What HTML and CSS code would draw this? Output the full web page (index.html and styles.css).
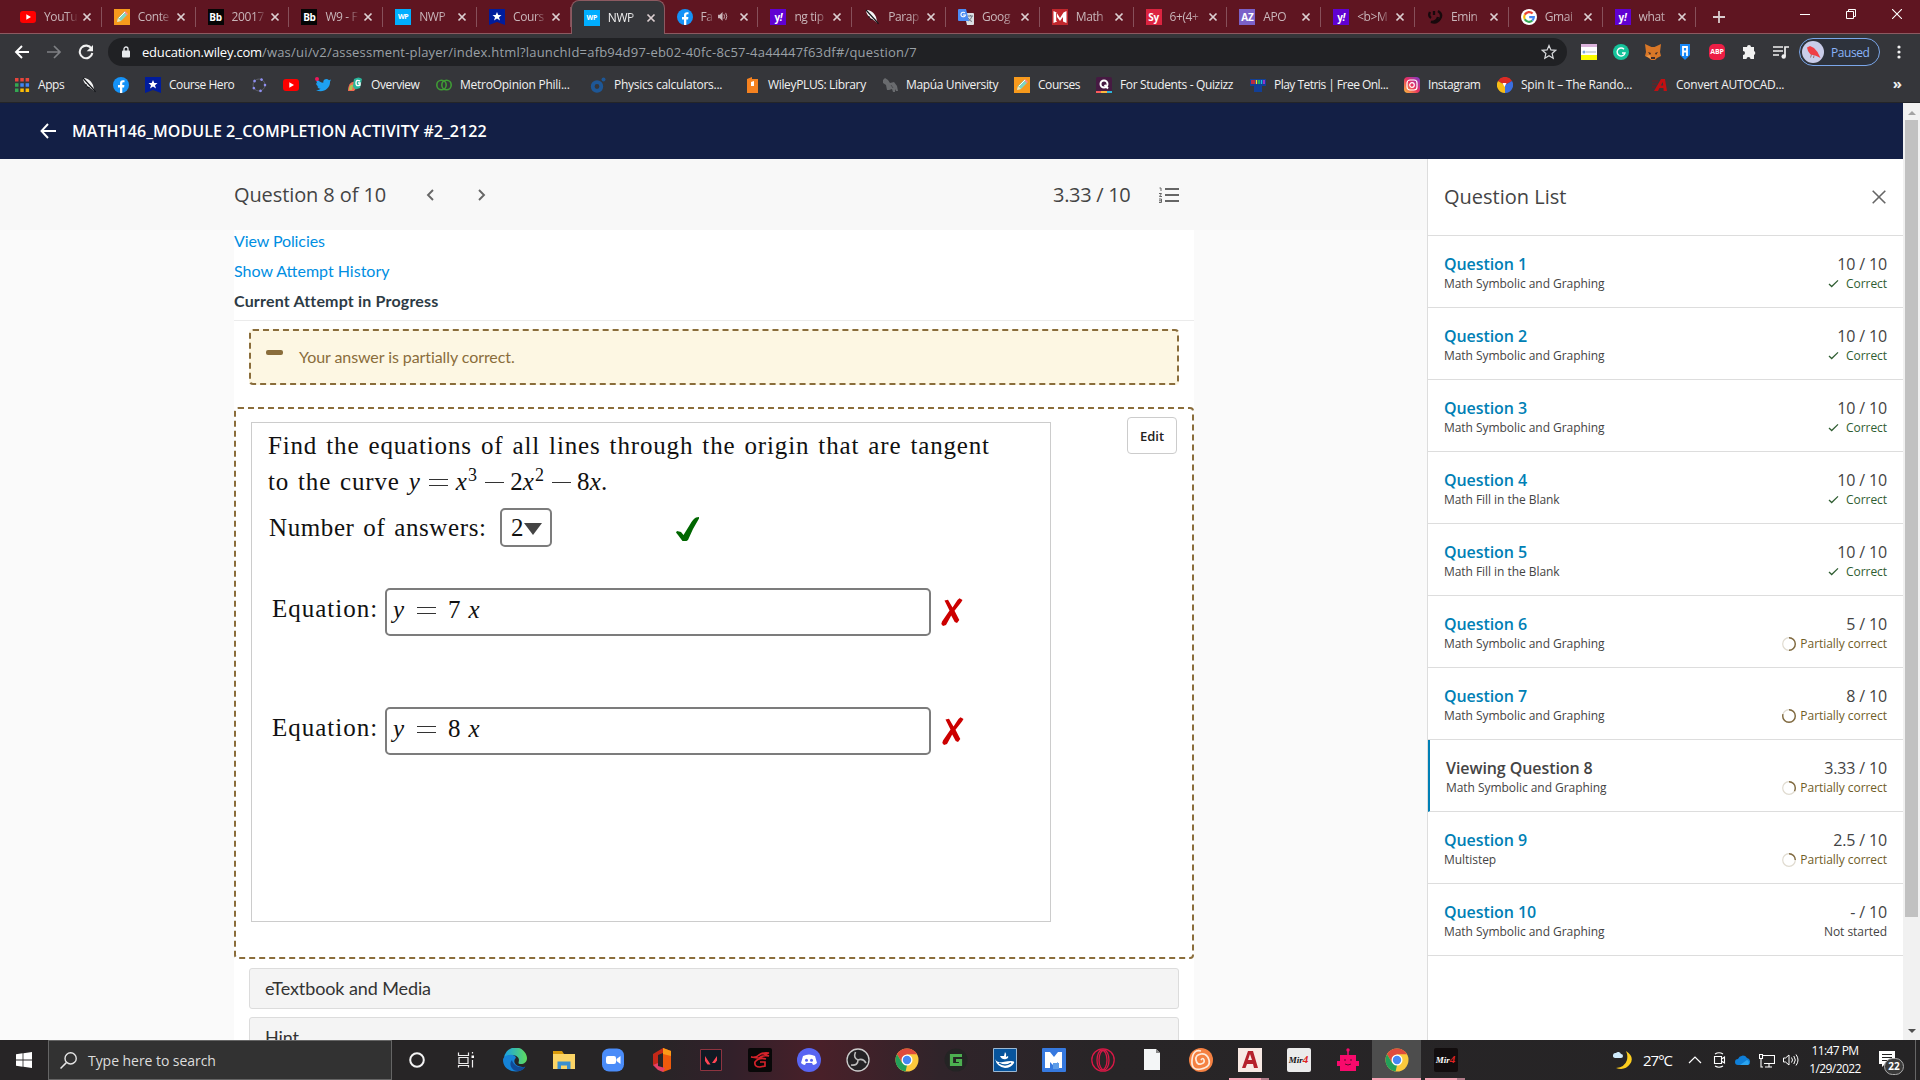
FILE: index.html
```html
<!DOCTYPE html>
<html lang="en">
<head>
<meta charset="utf-8">
<title>NWP Assessment Player</title>
<link rel="stylesheet" href="styles.css">
</head>
<body>
<svg class="defs" width="0" height="0">
  <symbol id="yt" viewBox="0 0 16 16"><rect y="2" width="16" height="12" rx="3" fill="#f00"/><path d="M6.3 5.2v5.6L11 8z" fill="#fff"/></symbol>
  <symbol id="pencil" viewBox="0 0 16 16"><rect width="16" height="16" fill="#f79a1c"/><path d="M3 13l1-4 6-6 3 3-6 6z" fill="#7fd4c0"/><path d="M10 3l1-1 3 3-1 1z" fill="#f58aa8"/><path d="M3 13l1-4 3 3z" fill="#fce2b0"/><path d="M5 9l6-6" stroke="#fff" stroke-width="1"/></symbol>
  <symbol id="hero" viewBox="0 0 16 16"><path d="M0 0h16v16l-8-3-8 3z" fill="#001c9c"/><path d="M8 3l1.3 3h3.2L10 8.300l1 3.200-3-2-3 2 1-3.200L3.500 6h3.200z" fill="#fff"/></symbol>
  <symbol id="fb" viewBox="0 0 16 16"><circle cx="8" cy="8" r="8" fill="#1592f7"/><path d="M7 16v-5.600H5V8h2V6.300C7 4.300 8.100 3.200 10 3.200l1.500.1v2h-1c-.9 0-1.200.5-1.200 1.200V8h2.100l-.3 2.400H9.300V16z" fill="#fff"/></symbol>
  <symbol id="feather" viewBox="0 0 16 16"><path d="M2 1c3-.5 8 2 10 7l1.500 6L8 10C5 8 2 5 2 1z" fill="#f5f5f5"/><path d="M2 1l11 12 1.500 2M6 8H4M8.500 10.500H6" stroke="#16181c" stroke-width="1.200" fill="none"/></symbol>
  <symbol id="goog" viewBox="0 0 16 16"><circle cx="8" cy="8" r="8" fill="#fff"/><g fill="none" stroke-width="2.200"><path d="M11.600 4.600A4.800 4.800 0 0 0 3.800 5.700" stroke="#ea4335"/><path d="M3.800 5.700a4.800 4.800 0 0 0 0 4.600" stroke="#fbbc05"/><path d="M3.800 10.300a4.800 4.800 0 0 0 7.500 1.200" stroke="#34a853"/><path d="M11.300 11.500A4.800 4.800 0 0 0 12.800 8.200H8.200" stroke="#4285f4"/></g></symbol>
  <symbol id="chrome" viewBox="0 0 24 24"><circle cx="12" cy="12" r="11.500" fill="#fbc93c"/><path d="M2 6.300A11.500 11.500 0 0 1 22 6.300H12L7 14.500z" fill="#df4b3c"/><path d="M2 6.300l5.100 8.500L12 17.300l-1.400 6.100A11.500 11.500 0 0 1 2 6.300z" fill="#23a05a"/><circle cx="12" cy="12" r="5.500" fill="#fff"/><circle cx="12" cy="12" r="4.200" fill="#4587f3"/></symbol>
  <symbol id="x" viewBox="0 0 10 10"><path d="M1.500 1.500l7 7M8.500 1.500l-7 7" stroke="currentColor" stroke-width="1.700"/></symbol>
  <symbol id="ok" viewBox="0 0 12 10"><path d="M1 5.500L4 8.400 11 1.500" fill="none" stroke="currentColor" stroke-width="1.400"/></symbol>
  <symbol id="wrong" viewBox="0 0 22 28"><path d="M3.500 2.500L7 1.800 11.500 9.500 16.500 2 18.500.3 21.500 2 20 4.500 13.500 12.800 18.300 22 16 25 13.700 24 10.200 17.500 5 27 2 28 .3 26 1 23.500 8.500 12.500z" fill="#c00"/></symbol>
</svg>

<header class="tabs">
  <div class="tab"><svg class="i"><use href="#yt"/></svg><span>YouTu</span><svg class="c"><use href="#x"/></svg></div>
  <div class="tab"><svg class="i"><use href="#pencil"/></svg><span>Conte</span><svg class="c"><use href="#x"/></svg></div>
  <div class="tab"><b class="i bb">Bb</b><span>20017</span><svg class="c"><use href="#x"/></svg></div>
  <div class="tab"><b class="i bb">Bb</b><span>W9 - F</span><svg class="c"><use href="#x"/></svg></div>
  <div class="tab"><b class="i wp">WP</b><span>NWP</span><svg class="c"><use href="#x"/></svg></div>
  <div class="tab"><svg class="i"><use href="#hero"/></svg><span>Cours</span><svg class="c"><use href="#x"/></svg></div>
  <div class="tab on"><b class="i wp">WP</b><span>NWP</span><svg class="c"><use href="#x"/></svg></div>
  <div class="tab"><svg class="i"><use href="#fb"/></svg><span class="short">Fa</span><svg class="snd" viewBox="0 0 11 10"><path d="M0 3h2l3-3v10L2 7H0z" fill="#cdb9bd"/><path d="M6.500 2.500q1.500 2.500 0 5M8.500 1q2.500 4 0 8" stroke="#cdb9bd" fill="none"/></svg><svg class="c"><use href="#x"/></svg></div>
  <div class="tab"><b class="i yh">y<i>!</i></b><span>ng tip</span><svg class="c"><use href="#x"/></svg></div>
  <div class="tab"><svg class="i"><use href="#feather"/></svg><span>Parap</span><svg class="c"><use href="#x"/></svg></div>
  <div class="tab"><svg class="i" viewBox="0 0 16 16"><path d="M6 4h9q1 0 1 1v10q0 1-1 1H9z" fill="#dcdfe3"/><path d="M10 7h5M12.500 6v1m1.500 0q-1 4-4 5m0-3q1.500 3 4 3.500" stroke="#6f7680" fill="none"/><path d="M1 0h7l3 12H1q-1 0-1-1V1q0-1 1-1z" fill="#4b8bf4"/><path d="M7 4a2.300 2.300 0 1 0 .5 2H5" stroke="#fff" stroke-width="1.100" fill="none"/></svg><span>Goog</span><svg class="c"><use href="#x"/></svg></div>
  <div class="tab"><svg class="i" viewBox="0 0 16 16"><rect width="16" height="16" fill="#c2272d"/><path d="M1.500 2l3 1.500L8 9l3.500-5.500 3-1.500v12L11 12.500V8l-3 4-3-4v4.500L1.500 14z" fill="#fff"/><path d="M4.500 4v8" stroke="#c2272d" stroke-width=".8"/></svg><span>Math</span><svg class="c"><use href="#x"/></svg></div>
  <div class="tab"><b class="i sy">Sy</b><span>6+(4+</span><svg class="c"><use href="#x"/></svg></div>
  <div class="tab"><b class="i az">AZ</b><span>APO</span><svg class="c"><use href="#x"/></svg></div>
  <div class="tab"><b class="i yh">y<i>!</i></b><span>&lt;b&gt;M</span><svg class="c"><use href="#x"/></svg></div>
  <div class="tab"><svg class="i" viewBox="0 0 16 16"><path d="M3 3q-2 4 1 6M7 2v4M11 2q5 3 2 8-3 5-9 3 6 0 7-5" stroke="#17090c" stroke-width="2.300" fill="none"/></svg><span>Emin</span><svg class="c"><use href="#x"/></svg></div>
  <div class="tab"><svg class="i"><use href="#goog"/></svg><span>Gmai</span><svg class="c"><use href="#x"/></svg></div>
  <div class="tab"><b class="i yh">y<i>!</i></b><span>what</span><svg class="c"><use href="#x"/></svg></div>
  <svg class="plus" viewBox="0 0 12 12"><path d="M6 0v12M0 6h12" stroke="#d9ccce" stroke-width="1.800"/></svg>
  <div class="winbtns">
    <svg viewBox="0 0 10 10"><path d="M0 5.500h10" stroke="#fff"/></svg>
    <svg viewBox="0 0 10 10"><path d="M.5 2.500h7v7h-7zM2.500 2.500v-2h7v7h-2" stroke="#fff" fill="none"/></svg>
    <svg viewBox="0 0 10 10"><path d="M0 0l10 10M10 0L0 10" stroke="#fff" stroke-width="1.100"/></svg>
  </div>
</header>

<div class="toolbar">
  <svg class="nav" viewBox="0 0 16 16"><path d="M15 8H2M8 2L2 8l6 6" stroke="#fff" stroke-width="1.900" fill="none"/></svg>
  <svg class="nav" viewBox="0 0 16 16"><path d="M1 8h13M8 2l6 6-6 6" stroke="#7f8084" stroke-width="1.700" fill="none"/></svg>
  <svg class="nav" viewBox="0 0 16 16"><path d="M13.500 4.700A6.300 6.300 0 1 0 14.300 9" stroke="#f1f1f1" stroke-width="2.100" fill="none"/><path d="M15 1v6.300H8.700z" fill="#f1f1f1"/></svg>
  <div class="omni">
    <svg class="lock" viewBox="0 0 8 12"><path d="M2 5V3a2 2 0 0 1 4 0v2" stroke="#e8eaed" stroke-width="1.300" fill="none"/><rect y="4.500" width="8" height="7" rx="1" fill="#e8eaed"/></svg>
    <p><em>education.wiley.com</em>/was/ui/v2/assessment-player/index.html?launchId=afb94d97-eb02-40fc-8c57-4a44447f63df#/question/7</p>
    <svg class="star" viewBox="0 0 16 16"><path d="M8 1.500l1.900 4.400 4.800.4-3.600 3.200 1.100 4.700L8 11.700l-4.200 2.500 1.100-4.700L1.300 6.300l4.800-.4z" fill="none" stroke="#d8dadd" stroke-width="1.200"/></svg>
  </div>
  <div class="exts">
    <svg viewBox="0 0 16 16"><path fill="#dcb4dc" d="M0 0h16v3H0z"/><path fill="#fff" d="M0 3h16v8H0z"/><path fill="#fdfd00" d="M0 11h16v5H0z"/><circle cx="3" cy="8" r="1.500" fill="#7fa8e0"/><path stroke="#a8b4c4" d="M5 8h10"/></svg>
    <svg viewBox="0 0 16 16"><circle cx="8" cy="8" r="8" fill="#15c39a"/><path d="M11 5.200A4 4 0 1 0 12 9H9M12 9l-1.500 2.500" stroke="#fff" stroke-width="1.400" fill="none"/></svg>
    <svg viewBox="0 0 16 16"><path d="M0 0l6.500 3h3L16 0l-1 8 1 4-4 2-2 2H6l-2-2-4-2 1-4z" fill="#d97727"/><path d="M3 8l3 1-1 2zM13 8l-3 1 1 2zM6 13h4v2H6z" fill="#3b2a2a"/><path d="M1 12l4-1 1 4z" fill="#ee9c4d"/></svg>
    <svg viewBox="0 0 16 16"><path d="M3 0h10v11l-5 5-5-5z" fill="#1687f8"/><path d="M6 12V3h4v4.500H6M10 7v5" stroke="#fff" stroke-width="1.800" fill="none"/></svg>
    <b class="abp">ABP</b>
    <svg viewBox="0 0 16 16"><path d="M6 3a2 2 0 0 1 4 0h3v4a2.200 2.200 0 0 1 0 4v4H9.500a2 2 0 0 0-4 0H2v-4a2 2 0 0 0 0-4V3z" fill="#f1f1f1"/></svg>
    <svg viewBox="0 0 16 16"><path d="M0 3h10M0 7h10M0 11h6M12 12V3h4" stroke="#f1f1f1" stroke-width="1.700" fill="none"/><circle cx="10.700" cy="12.500" r="2.200" fill="#f1f1f1"/></svg>
  </div>
  <div class="profile"><svg viewBox="0 0 22 22"><circle cx="11" cy="11" r="11" fill="#c9cde9"/><path d="M5 6.500l3-1.500 4 2 3.500 4 3 6-3-1.500-2.500-1-4.500-1L6 10z" fill="#ef3e45"/><path d="M9.500 13.500l-1 3M12 14.500l-.5 2.500" stroke="#8b5b4b" stroke-width=".8"/></svg><span>Paused</span></div>
  <svg class="dots" viewBox="0 0 4 14"><g fill="#f1f1f1"><circle cx="2" cy="2" r="1.600"/><circle cx="2" cy="7" r="1.600"/><circle cx="2" cy="12" r="1.600"/></g></svg>
</div>

<nav class="bookmarks">
  <div class="bm w67"><svg viewBox="0 0 16 16"><g fill="#e8453c"><path d="M1 1h3.500v3.500H1zM6.300 1h3.500v3.500H6.300zM11.600 1h3.500v3.500h-3.500z"/></g><path d="M1 6.300h3.500v3.500H1zM1 11.600h3.500v3.500H1z" fill="#33a852"/><path d="M6.300 6.300h3.500v3.500H6.300zM11.600 6.300h3.500v3.500h-3.500z" fill="#4285f4"/><path d="M6.300 11.600h3.500v3.500H6.300zM11.600 11.600h3.500v3.500h-3.500z" fill="#fbbc05"/></svg><span>Apps</span></div>
  <div class="bm w32"><svg><use href="#feather"/></svg></div>
  <div class="bm w32"><svg><use href="#fb"/></svg></div>
  <div class="bm w106"><svg><use href="#hero"/></svg><span>Course Hero</span></div>
  <div class="bm w32"><svg viewBox="0 0 16 16"><circle cx="8" cy="8" r="6" fill="none" stroke="#5a5c66" stroke-width="1"/><circle cx="8" cy="8" r="6" fill="none" stroke="#8f8ff0" stroke-width="2.600" stroke-linecap="round" stroke-dasharray=".1 7.440"/></svg></div>
  <div class="bm w32"><svg><use href="#yt"/></svg></div>
  <div class="bm w32"><svg viewBox="0 0 16 16"><path d="M1 13c2 .3 3.500-.2 4.500-1.200C3 11.500 2.500 10 2.300 9.500h1.200C1.500 8.500 1 7 1.200 6l1.200.4C1 4.500 1.500 3 2 2.200 4 4.500 6 5.600 8.300 5.700 7.800 2 12 .8 14 3.200L16 2.500 15 4.700c.5 7-7.500 12-14 8.300z" fill="#1da1f2"/><circle cx="2" cy="2" r="2" fill="#f0185c"/></svg></div>
  <div class="bm w89"><svg viewBox="0 0 16 16"><path d="M1 14C1 8 4 4 8 5l3 4-4 5z" fill="#f26b50"/><path d="M2 13C2 9 4 7 6 8l-1 5z" fill="#a8c951"/><path d="M7 2q5-3 8 0l-2 9q-6 3-7-2z" fill="#29b59b"/><path d="M13 4q-4-2-4 2t4 2V6h-2" stroke="#fff" stroke-width="1.400" fill="none"/></svg><span>Overview</span></div>
  <div class="bm w154"><svg viewBox="0 0 16 16"><g fill="none" stroke="#3f9c35" stroke-width="1.600"><circle cx="5.500" cy="8" r="4.700"/><circle cx="10.500" cy="8" r="4.700"/></g></svg><span class="t2">MetroOpinion Phili...</span></div>
  <div class="bm w154"><svg viewBox="0 0 16 16"><circle cx="7" cy="9.500" r="4.300" fill="none" stroke="#1e5796" stroke-width="3.800"/><circle cx="13.500" cy="2.500" r="2" fill="#1e5796"/></svg><span class="t2">Physics calculators...</span></div>
  <div class="bm w138"><svg viewBox="0 0 16 16"><path d="M3 2l5-2v2h6v14H3z" fill="#f58220"/><path d="M7 5l3-1v5H7z" fill="#fff"/></svg><span class="t3">WileyPLUS: Library</span></div>
  <div class="bm w132"><svg viewBox="0 0 16 16"><path d="M1 3l2-2 3 2 2 3 4-1 3 4 1 5h-2l-1-2v3h-2l-1-3-3 1H5l-1-5-3-2z" fill="#696b6e"/><path d="M9 8l2 3" stroke="#4a4c50"/></svg><span class="t3">Mapúa University</span></div>
  <div class="bm w82"><svg><use href="#pencil"/></svg><span>Courses</span></div>
  <div class="bm w154"><svg viewBox="0 0 16 16"><rect width="16" height="16" rx="2" fill="#461a42"/><circle cx="8" cy="7" r="3.500" fill="none" stroke="#fff" stroke-width="2"/><path d="M8.500 8l3.500 3.500" stroke="#fff" stroke-width="2"/><path d="M0 15h5" stroke="#fc5b5b" stroke-width="2"/><path d="M5 15h6" stroke="#fdb73e" stroke-width="2"/><path d="M11 15h5" stroke="#2db5d8" stroke-width="2"/></svg><span class="t3">For Students - Quizizz</span></div>
  <div class="bm w154"><svg viewBox="0 0 16 16"><path d="M0 2h16v7h-4v6H4V9H0z" fill="#123f96"/><path d="M2 3v4M4 3v4" stroke="#f22" stroke-width="1.400"/><path d="M6.500 3v4" stroke="#fd2" stroke-width="1.400"/><path d="M9 3v4" stroke="#2d4" stroke-width="1.400"/><path d="M11.500 3v4" stroke="#2bd" stroke-width="1.400"/><path d="M14 3v4" stroke="#c3d" stroke-width="1.400"/></svg><span class="t4">Play Tetris | Free Onl...</span></div>
  <div class="bm w93"><svg viewBox="0 0 16 16"><defs><linearGradient id="ig" x1="0" y1="1" x2="1" y2="0"><stop stop-color="#fdc13d"/><stop offset=".5" stop-color="#e8315f"/><stop offset="1" stop-color="#7b3ad0"/></linearGradient></defs><rect width="16" height="16" rx="4" fill="url(#ig)"/><rect x="3" y="3" width="10" height="10" rx="3" fill="none" stroke="#fff" stroke-width="1.200"/><circle cx="8" cy="8" r="2.300" fill="none" stroke="#fff" stroke-width="1.200"/></svg><span>Instagram</span></div>
  <div class="bm w155"><svg viewBox="0 0 16 16"><path d="M8 8L1 4A8 8 0 0 1 15 4z" fill="#db2b25"/><path d="M8 8l7-4a8 8 0 0 1-7 12z" fill="#3b6fe0"/><path d="M8 8v8A8 8 0 0 1 1 4z" fill="#f7bd17"/><path d="M5.500 6h4l-2 4z" fill="#fff"/></svg><span class="t2">Spin It – The Rando...</span></div>
  <div class="bm w200"><svg viewBox="0 0 16 16"><path d="M2 14L9 2h4l2 12h-3.300l-.3-3H7.500L6 14zM8.800 8.500h2.400l-.4-3.500z" fill="#c10f12"/><path d="M0 4h6M0 7h5M0 10h3" stroke="#6e1e22"/></svg><span class="t2">Convert AUTOCAD...</span></div>
  <span class="more">»</span>
</nav>

<main class="page">
  <section class="left">
    <div class="apphead"><svg viewBox="0 0 16 16"><path d="M16 8H1.500M8 1L1.500 8 8 15" stroke="#fff" stroke-width="1.900" fill="none"/></svg><h1>MATH146_MODULE 2_COMPLETION ACTIVITY #2_2122</h1></div>
    <div class="cols">
      <div class="work">
        <div class="qnav">
          <span class="qn">Question 8 of 10</span>
          <svg class="arr" viewBox="0 0 8 12"><path d="M7 1L2 6l5 5" stroke="#666" stroke-width="1.900" fill="none"/></svg>
          <svg class="arr a2" viewBox="0 0 8 12"><path d="M1 1l5 5-5 5" stroke="#666" stroke-width="1.900" fill="none"/></svg>
          <span class="score">3.33 / 10</span>
          <svg class="list" viewBox="0 0 20 16"><path d="M6 2h14M6 8h14M6 14h14" stroke="#666" stroke-width="2"/><path d="M.5 1H2v3M0 6.500h2.500L.5 9.500h2.500M0 12h2.500v3.500H0M0 13.800h2.500" stroke="#666" fill="none"/></svg>
        </div>
        <div class="sheet">
          <a class="pol">View Policies</a>
          <a class="hist">Show Attempt History</a>
          <h2>Current Attempt in Progress</h2>
          <div class="alert"><i></i><span>Your answer is partially correct.</span></div>
          <div class="qbox">
            <div class="frame">
              <p><span class="l1">Find the equations of all lines through the origin that are tangent</span><br><span class="l2">to the curve </span><span class="math"><i>y</i><u class="eq"></u><i>x</i><sup>3</sup><u></u>2<i>x</i><sup>2</sup><u></u>8<i>x</i>.</span></p>
              <div class="num"><span>Number of answers:</span><div class="sel">2<svg viewBox="0 0 18 12"><path d="M0 0h18L9 12z" fill="#444"/></svg></div><svg class="tick" viewBox="0 0 23 24"><path d="M0 15.500L1 14l4 1 2.500 3L14 7.500Q17 2 20 .5l3-.5v1.500L17 12l-5 11-1.500 1h-4L2 18z" fill="#060"/></svg></div>
              <div class="row"><span>Equation:</span><div class="field"><i>y</i><u class="eq"></u>7<i class="fx">x</i></div><svg><use href="#wrong"/></svg></div>
              <div class="row second"><span>Equation:</span><div class="field"><i>y</i><u class="eq"></u>8<i class="fx">x</i></div><svg><use href="#wrong"/></svg></div>
            </div>
            <button>Edit</button>
          </div>
          <div class="acc">eTextbook and Media</div>
          <div class="acc">Hint</div>
        </div>
      </div>
      <aside>
        <div class="ah"><span>Question List</span><svg viewBox="0 0 14 14"><path d="M.7.700l12.600 12.600M13.300.700L.7 13.300" stroke="#666" stroke-width="1.600"/></svg></div>
        <div class="q"><div><b>Question 1</b><small>Math Symbolic and Graphing</small></div><div class="r"><span>10 / 10</span><small class="g"><svg><use href="#ok"/></svg>Correct</small></div></div>
        <div class="q"><div><b>Question 2</b><small>Math Symbolic and Graphing</small></div><div class="r"><span>10 / 10</span><small class="g"><svg><use href="#ok"/></svg>Correct</small></div></div>
        <div class="q"><div><b>Question 3</b><small>Math Symbolic and Graphing</small></div><div class="r"><span>10 / 10</span><small class="g"><svg><use href="#ok"/></svg>Correct</small></div></div>
        <div class="q"><div><b>Question 4</b><small>Math Fill in the Blank</small></div><div class="r"><span>10 / 10</span><small class="g"><svg><use href="#ok"/></svg>Correct</small></div></div>
        <div class="q"><div><b>Question 5</b><small>Math Fill in the Blank</small></div><div class="r"><span>10 / 10</span><small class="g"><svg><use href="#ok"/></svg>Correct</small></div></div>
        <div class="q"><div><b>Question 6</b><small>Math Symbolic and Graphing</small></div><div class="r"><span>5 / 10</span><small class="p"><svg viewBox="0 0 14 14"><circle class="tr" cx="7" cy="7" r="6.300"/><circle class="ar" cx="7" cy="7" r="6.300" pathLength="100" stroke-dasharray="50 100"/></svg>Partially correct</small></div></div>
        <div class="q"><div><b>Question 7</b><small>Math Symbolic and Graphing</small></div><div class="r"><span>8 / 10</span><small class="p"><svg viewBox="0 0 14 14"><circle class="tr" cx="7" cy="7" r="6.300"/><circle class="ar" cx="7" cy="7" r="6.300" pathLength="100" stroke-dasharray="80 100"/></svg>Partially correct</small></div></div>
        <div class="q cur"><div><b>Viewing Question 8</b><small>Math Symbolic and Graphing</small></div><div class="r"><span>3.33 / 10</span><small class="p"><svg viewBox="0 0 14 14"><circle class="tr" cx="7" cy="7" r="6.300"/><circle class="ar" cx="7" cy="7" r="6.300" pathLength="100" stroke-dasharray="33.300 100"/></svg>Partially correct</small></div></div>
        <div class="q"><div><b>Question 9</b><small>Multistep</small></div><div class="r"><span>2.5 / 10</span><small class="p"><svg viewBox="0 0 14 14"><circle class="tr" cx="7" cy="7" r="6.300"/><circle class="ar" cx="7" cy="7" r="6.300" pathLength="100" stroke-dasharray="25 100"/></svg>Partially correct</small></div></div>
        <div class="q"><div><b>Question 10</b><small>Math Symbolic and Graphing</small></div><div class="r"><span>- / 10</span><small>Not started</small></div></div>
      </aside>
    </div>
  </section>
  <div class="scroll"><svg viewBox="0 0 8 4"><path d="M0 4h8L4 0z" fill="#a3a3a3"/></svg><div class="thumb"></div><svg class="dn" viewBox="0 0 8 4"><path d="M0 0h8L4 4z" fill="#505050"/></svg></div>
</main>

<footer class="taskbar">
  <div class="start"><svg viewBox="0 0 16 16"><path d="M0 2.300L6.600 1.300v6.300H0zM7.400 1.200L16 0v7.600H7.400zM0 8.400h6.600v6.300L0 13.700zM7.400 8.400H16V16l-8.600-1.200z" fill="#fff"/></svg></div>
  <div class="search"><svg viewBox="0 0 16 16"><circle cx="10" cy="6" r="5.300" fill="none" stroke="#e6e6e6" stroke-width="1.300"/><path d="M6 10l-5.500 5.500" stroke="#e6e6e6" stroke-width="1.400"/></svg><span>Type here to search</span></div>
  <div class="app"><svg viewBox="0 0 24 24"><circle cx="12" cy="12" r="6.800" fill="none" stroke="#f4f4f4" stroke-width="2"/></svg></div>
  <div class="app"><svg viewBox="0 0 24 24"><path d="M4.500 4.500v3h10v-3M5 9.500h9v6H5zM4.500 19.500v-2h10v2M18.500 4v1.500M18.500 12v7.500" fill="none" stroke="#eee" stroke-width="1.200"/><path d="M17.500 7.500h2.500V10h-2.500z" fill="#fff"/></svg></div>
  <div class="app"><svg viewBox="0 0 24 24"><defs><linearGradient id="ed"><stop stop-color="#18a0e8"/><stop offset="1" stop-color="#5fdc5c"/></linearGradient></defs><path d="M1 12A11.500 11.500 0 0 1 24 10c0 4-3 6-6 6-4 0-2-2-2-4 0-5-10-8-15 0z" fill="url(#ed)"/><path d="M0 12c0-5 12-8 13-2-3 2-3 9 9 9-5 8-22 5-22-7z" fill="#1583d6"/><path d="M9 12c-4 4 0 12 7 11 3-.5 5-2 6.500-4.500C16 21 10 17 9 12z" fill="#104a97"/></svg></div>
  <div class="app"><svg viewBox="0 0 24 24"><path d="M1 3h9l2 3H1z" fill="#d99a0a"/><path d="M1 6h22v15H1z" fill="#fbd465"/><path d="M5.500 13.500h13V21H15v-3.500H9V21H5.500z" fill="#3a8fd0"/></svg></div>
  <div class="app"><svg viewBox="0 0 24 24"><rect x="1" y=".5" width="22" height="23" rx="7" fill="#4a8cf8"/><rect x="5" y="8" width="10" height="8" rx="2" fill="#fff"/><path d="M15.500 11l4-3v8l-4-3z" fill="#fff"/></svg></div>
  <div class="app"><svg viewBox="0 0 24 24"><path d="M3 6l10-6v5L8 7v9l-3 2-2-1z" fill="#c42818"/><path d="M13 0l8 3v18l-8 3z" fill="#ee5a0c"/><path d="M3 17l5-2v3l7 2-2 4-5-2z" fill="#e54068"/><path d="M13 0l8 3v5l-8-2z" fill="#fb9a18"/></svg></div>
  <div class="app"><svg viewBox="0 0 24 24"><path d="M1.500 1.500h21v21h-21z" fill="#0f1923" stroke="#8e3440"/><path d="M6 8l5.500 8.500H8.500L6 13zM18 8l-5 7h3l2-2.500z" fill="#ff4655"/></svg></div>
  <div class="app"><svg viewBox="0 0 24 24"><rect width="24" height="24" rx="2" fill="#080808"/><path d="M3 9q5 1 8-2 4-3 10-2l-5 1 5 2q-7-1-10 2zM18 11q-7-2-11 3-1 5 5 5l5-1v-4h-5" fill="none" stroke="#d5222a" stroke-width="1.700"/></svg></div>
  <div class="app"><svg viewBox="0 0 24 24"><circle cx="12" cy="12" r="12" fill="#5865f2"/><path d="M6 8q6-3 12 0l2 7q-2 2-4 2l-1-2H9l-1 2q-2 0-4-2z" fill="#fff"/><circle cx="9.500" cy="12.300" r="1.500" fill="#5865f2"/><circle cx="14.500" cy="12.300" r="1.500" fill="#5865f2"/></svg></div>
  <div class="app"><svg viewBox="0 0 24 24"><circle cx="12" cy="12" r="11" fill="#242225" stroke="#ccc" stroke-width="1.300"/><path d="M12 12q-5-2-2.500-8M12 12q5-2 8 3M12 12q0 6-7 5" fill="none" stroke="#bbb" stroke-width="1.600"/></svg></div>
  <div class="app"><svg><use href="#chrome"/></svg></div>
  <div class="app"><svg viewBox="0 0 24 24"><circle cx="12" cy="12" r="11.500" fill="#242424"/><path d="M18 7.500H7.500v9h9v-4H12" fill="none" stroke="#4caf50" stroke-width="3.200"/></svg></div>
  <div class="app"><svg viewBox="0 0 24 24"><path d="M.5.500h23v23H.5z" fill="#07549c" stroke="#9bb8d3"/><path d="M2 11q2 4 8 3 5-1 8-1 4 0 3 2-3 5-9 5-8-1-10-9z" fill="#fff"/><path d="M6 15q6 4 12 0" stroke="#07549c" stroke-width="1.300" fill="none"/><path d="M7 8q2 4 6 3 3-1 2-3l-2 1q1-3-1-5l-1 4z" fill="#fff"/></svg></div>
  <div class="app"><svg viewBox="0 0 24 24"><rect width="24" height="24" rx="1" fill="#3679df"/><path d="M3 20V4h5l4 5 4-5h4v16h-4v-6l-4 4-4-4v6z" fill="#fff"/><path d="M11 15h6v6h-6z" fill="#5c9ce8"/></svg></div>
  <div class="app"><svg viewBox="0 0 24 24"><g fill="none" stroke="#d81846" stroke-width="1.300"><circle cx="12" cy="12" r="11.200"/><ellipse cx="11" cy="12" rx="5" ry="10"/><ellipse cx="13" cy="12" rx="5" ry="10"/></g></svg></div>
  <div class="app"><svg viewBox="0 0 24 24"><path d="M4 1h12l4 4v17H4z" fill="#f4f6f7"/><path d="M16 1v4h4z" fill="#888"/></svg></div>
  <div class="app"><svg viewBox="0 0 24 24"><circle cx="12" cy="12" r="12" fill="#f58142"/><path d="M12 12q2-3 3 0t-3 4-5-4 5-6 8 6-8 9-9-9 9-9" fill="none" stroke="#fdebdd" stroke-width="1.700"/></svg></div>
  <div class="app open"><svg viewBox="0 0 24 24"><path d="M0 0h24v24H0z" fill="#f8e9e4"/><path d="M4 20L10 3h5l5 17h-4l-1-4H9l-1.500 4zM10 12h4l-2-6z" fill="#b5202b"/></svg></div>
  <div class="app"><i class="mir">Mir<em>4</em></i></div>
  <div class="app"><svg viewBox="0 0 24 24"><path d="M12 1v8" stroke="#f0127a" stroke-width="1.500"/><circle cx="12" cy="2" r="1.700" fill="#f80a6c"/><path d="M4 7h16v6h3v5h-3v5H4v-5H1v-5h3z" fill="#f80a6c"/><path d="M8 12h2M14 12h2M9 16q3 2 6 0" stroke="#5d0a2c" fill="none"/></svg></div>
  <div class="app active"><svg><use href="#chrome"/></svg></div>
  <div class="app open"><i class="mir dark">Mir<em>4</em></i></div>
  <div class="tray">
    <svg class="moon" viewBox="0 0 20 20"><path d="M13 1q9 6 4 13t-14 4q9-1 11-8 1-5-1-9z" fill="#fdce1e"/><path d="M2 8a2.500 2.500 0 0 1 1-5 3 3 0 0 1 5 1 2 2 0 0 1 0 4z" fill="#cfeafb"/></svg>
    <span class="temp">27°C</span>
    <svg class="t" viewBox="0 0 16 16"><path d="M2 11l6-6 6 6" stroke="#fff" stroke-width="1.200" fill="none"/></svg>
    <svg class="t" viewBox="0 0 16 16"><path d="M4 2q4-2.500 8 0M4 14q4 2.500 8 0M3.500 4.500h7v7h-7zM10.500 7l3-2v6l-3-2" stroke="#fff" stroke-width="1.100" fill="none"/></svg>
    <svg class="t" viewBox="0 0 16 16"><path d="M3 13a3 3 0 0 1 0-6 5 5 0 0 1 9-1 3.700 3.700 0 0 1 1 7z" fill="#0f7fd8"/><path d="M5 13l7-5a3 3 0 0 1 1 5z" fill="#2ba5f0"/></svg>
    <svg class="t" viewBox="0 0 16 16"><path d="M4 3.500h11.500v8H5M10 12v3M6 15h7M.5 2.500h3v4h-3zM2 7v8h2" stroke="#fff" stroke-width="1.100" fill="none"/></svg>
    <svg class="t" viewBox="0 0 16 16"><path d="M.5 6h2L6 3v10L2.500 10h-2zM8.500 5.500q2 2.500 0 5M10.800 4q3 4 0 8M13 2.500q4 5.500 0 11" stroke="#fff" stroke-width="1" fill="none"/></svg>
    <div class="clock"><span>11:47 PM</span><span>1/29/2022</span></div>
    <div class="note"><svg viewBox="0 0 16 16"><path d="M0 0h16v13H6l-3 3v-3H0z" fill="#fff"/><path d="M3 3.500h10M3 6.500h10M3 9.500h7" stroke="#222"/></svg><b>22</b></div>
    <i class="desk"></i>
  </div>
</footer>
</body>
</html>
```
FILE: styles.css
```css
* { box-sizing: border-box; }
body { margin: 0; width: 1920px; height: 1080px; overflow: hidden; font-family: "Open Sans", sans-serif; font-size: 12px; display: flex; flex-direction: column; background: #fff; }
svg { display: block; flex: none; }
.defs { position: absolute; }

/* browser tab strip */
.tabs { height: 34px; flex: none; background: #5f1521; border-bottom: 1px solid #8c5a61; display: flex; padding-left: 8px; color: #c9b6ba; }
.tab { width: 93.8px; height: 33px; flex: none; display: flex; align-items: center; padding-left: 12px; position: relative; }
.tab::after { content: ""; position: absolute; right: 0; top: 7px; width: 1px; height: 20px; background: #87505a; }
.tab .i { width: 16px; height: 16px; flex: none; }
.tab span { width: 34px; flex: none; margin-left: 8px; white-space: nowrap; letter-spacing: -.4px; -webkit-mask-image: linear-gradient(90deg, #000 65%, rgba(0,0,0,.15) 95%); mask-image: linear-gradient(90deg, #000 65%, rgba(0,0,0,.15) 95%); }
.tab span.short { width: 12px; -webkit-mask-image: linear-gradient(90deg, #000 40%, rgba(0,0,0,.2)); mask-image: linear-gradient(90deg, #000 40%, rgba(0,0,0,.2)); }
.tab .snd { width: 10px; height: 9px; margin: 0 0 0 5px; }
.short + .snd + .c { margin-left: 11px; }
.tab .c { width: 10px; height: 10px; margin-left: 4px; color: #dccfd1; }
.tab.on { background: #35363a; height: 34px; border: 1px solid #8c5a61; border-bottom: 0; border-radius: 8px 8px 0 0; color: #f0f0f0; padding-left: 12px; }
.tab.on::after { display: none; }
.tab b { display: flex; align-items: center; justify-content: center; color: #fff; font: bold 10px/16px "Open Sans", sans-serif; letter-spacing: -.3px; }
.bb { background: #050505; }
.tab .wp { background: #00aeff; font-size: 7px; }
.yh { background: #6001d2; }
.sy { background: #dc2440; }
.az { background: #7b61c9; }
.plus { width: 12px; height: 12px; margin: 11px 0 0 17px; }
.winbtns { display: flex; margin: 9px 18px 0 auto; gap: 36px; }
.winbtns svg { width: 10px; height: 10px; }

/* address row */
.toolbar { height: 33px; flex: none; background: #35363a; display: flex; align-items: center; padding: 3px 0 0 14px; }
.nav { width: 16px; height: 16px; margin-right: 16px; }
.omni { width: 1459px; height: 28px; margin-left: -2px; border-radius: 14px; background: #202124; display: flex; align-items: center; padding: 0 10px 0 14px; }
.lock { width: 8px; height: 12px; }
.omni p { margin: 0 0 0 12px; font-size: 13px; letter-spacing: .2px; color: #9aa0a6; white-space: nowrap; }
.omni em { font-style: normal; color: #fff; letter-spacing: -.2px; }
.star { width: 16px; height: 16px; margin-left: auto; }
.exts { display: flex; gap: 16px; margin-left: 14px; }
.exts svg { width: 16px; height: 16px; }
.abp { width: 16px; height: 16px; border-radius: 5px; background: #ed1e45; color: #fff; font-size: 7px; line-height: 16px; text-align: center; letter-spacing: -.2px; }
.profile { width: 81px; height: 28px; border: 1px solid #7ba7ea; border-radius: 14px; margin-left: 10px; display: flex; align-items: center; padding-left: 2px; color: #8ab4f8; background: #2d323b; }
.profile svg { width: 22px; height: 22px; margin-right: 7px; }
.profile span { font-size: 12px; letter-spacing: -.45px; }
.dots { width: 4px; height: 14px; margin-left: 17px; }

/* bookmarks */
.bookmarks { height: 36px; flex: none; background: #35363a; border-bottom: 1px solid #242528; display: flex; align-items: center; padding-left: 14px; color: #f1f1f1; }
.bm { display: flex; flex: none; align-items: center; white-space: nowrap; }
.bm svg { width: 16px; height: 16px; margin-right: 8px; }
.bm span { letter-spacing: -.45px; margin-top: -1px; }
.bm .t2 { letter-spacing: -.25px; }
.bm .t3 { letter-spacing: -.35px; }
.bm .t4 { letter-spacing: -.52px; }
.w32 { width: 32px; } .w67 { width: 67px; } .w82 { width: 82px; } .w89 { width: 89px; } .w93 { width: 93px; }
.w106 { width: 106px; } .w132 { width: 132px; } .w138 { width: 138px; } .w154 { width: 154px; } .w155 { width: 155px; } .w200 { width: 200px; }
.more { margin: -4px 18px 0 auto; font-size: 15px; font-weight: bold; }

/* page */
.page { height: 937px; display: flex; flex: none; }
.left { width: 1903px; }
.apphead { height: 56px; background: #131f45; display: flex; align-items: center; padding-left: 40px; color: #fff; }
.apphead svg { width: 16px; height: 16px; margin-right: 16px; }
h1 { margin: 0; font-size: 16px; font-weight: 600; letter-spacing: .05px; white-space: nowrap; }
.cols { display: flex; height: 881px; overflow: hidden; }
.work { width: 1427px; background: #fafafa; }
.qnav { height: 71px; background: #f8f8f8; display: flex; align-items: center; padding: 0 0 0 234px; color: #444; font-size: 20px; }
.qn { width: 192px; white-space: nowrap; letter-spacing: -.1px; }
.arr { width: 8px; height: 12px; }
.a2 { margin-left: 44px; }
.score { margin-left: auto; width: 78px; white-space: nowrap; letter-spacing: -.3px; }
.list { width: 20px; height: 16px; margin: 0 248px 0 28px; }
.sheet { width: 960px; height: 810px; margin-left: 234px; background: #fff; font-family: Lato, sans-serif; font-size: 16px; color: #2d3b45; display: flex; flex-direction: column; }
.sheet a { color: #008ee2; height: 30px; line-height: 22px; flex: none; }
.sheet .pol { letter-spacing: -.1px; }
h2 { margin: 0; font-size: 16px; height: 31px; line-height: 22px; letter-spacing: .18px; border-bottom: 1px solid #ebebeb; flex: none; }
.alert { height: 56px; flex: none; margin: 8px 15px 0; border: 2px dashed #8a6d3b; border-radius: 4px; background: #fdf7e3; display: flex; align-items: center; color: #8a6d3b; padding-left: 15px; }
.alert i { width: 17px; height: 5px; border-radius: 2px; background: #8a6d3b; margin: -10px 16px 0 0; }
.alert span { letter-spacing: -.08px; margin-top: -2px; }
.qbox { height: 552px; flex: none; margin-top: 22px; border: 2px dashed #8a6d3b; border-radius: 4px; display: flex; justify-content: space-between; align-items: flex-start; padding: 8px 15px 0; }
.frame { width: 800px; height: 500px; margin-top: 5px; border: 1px solid #ccc; padding: 5px 0 0 16px; font: 25px/36px "Liberation Serif", serif; color: #111; }
.frame p { margin: 0; height: 71px; white-space: nowrap; }
.l1 { letter-spacing: .84px; word-spacing: 2px; }
.l2 { letter-spacing: .8px; word-spacing: 2px; }
.frame sup { font-size: 18px; line-height: 0; vertical-align: 9px; margin-left: 1px; }
.frame u { display: inline-block; width: 19px; height: 1px; background: #333; vertical-align: 7px; margin: 0 6px 0 8px; }
.frame .math { letter-spacing: .1px; }
.frame u.eq { height: 7px; background: none; border: solid #333; border-width: 1px 0; margin: 0 8px 0 9px; vertical-align: 4px; }
.num { display: flex; align-items: center; height: 39px; margin: 9px 0 0 1px; }
.num > span { width: 231px; letter-spacing: .6px; word-spacing: 2px; white-space: nowrap; }
.sel { width: 52px; height: 39px; border: 2px solid #7c7c7c; border-radius: 5px; display: flex; align-items: center; padding-left: 9px; line-height: 28px; }
.sel svg { width: 18px; height: 12px; margin-top: 3px; }
.tick { width: 23px; height: 24px; margin: 2px 0 0 124px; }
.row { display: flex; height: 48px; margin: 41px 0 0 4px; align-items: center; }
.row.second { margin-top: 71px; }
.row > span { width: 113px; letter-spacing: 1px; padding-bottom: 6px; }
.field { width: 546px; height: 48px; border: 2px solid #7c7c7c; border-radius: 5px; padding: 2px 0 0 6px; }
.field u.eq { margin: 0 12px 0 13px; }
.fx { margin-left: 8px; }
.row > svg { width: 22px; height: 28px; margin: 0 0 0 10px; }
.row.second > svg { margin-left: 11px; }
button { width: 50px; height: 37px; border: 1px solid #ccc; border-radius: 4px; background: #fff; color: #222; font: 600 13px "Open Sans", sans-serif; padding: 0; }
.acc { height: 41px; flex: none; margin: 9px 15px 0; border: 1px solid #dcdcdc; border-radius: 3px; background: #f4f4f4; padding-left: 15px; line-height: 38px; font-size: 18px; letter-spacing: -.1px; color: #333; }
.acc + .acc { margin-top: 8px; }

/* question list */
aside { width: 476px; background: #fff; border-left: 1px solid #ddd; color: #444; }
.ah { height: 77px; border-bottom: 1px solid #ddd; padding: 0 17px 0 16px; display: flex; align-items: center; justify-content: space-between; font-size: 20px; }
.ah span { margin-top: -2px; }
.ah svg { width: 14px; height: 14px; }
.q { height: 72px; border-bottom: 1px solid #ddd; padding: 17px 16px 0; display: flex; justify-content: space-between; }
.q b { display: block; font-size: 16px; font-weight: 600; line-height: 22px; letter-spacing: -.08px; color: #007fb5; }
.q small { display: flex; align-items: center; font-size: 12px; line-height: 17px; letter-spacing: -.05px; }
.r { display: flex; flex-direction: column; align-items: flex-end; }
.r span { font-size: 16px; line-height: 22px; letter-spacing: -.15px; }
.r .g { color: #2f5d31; } .r .p { color: #6f5d27; }
.g svg { width: 11px; height: 9px; margin-right: 7px; }
.p svg { width: 14px; height: 14px; margin-right: 4px; transform: rotate(-90deg); }
.tr, .ar { fill: none; stroke: #e0dbd0; stroke-width: 1.2; }
.ar { stroke: #806a40; stroke-width: 1.4; }
.cur { border-left: 2px solid #007fb5; }
.cur b { color: #444; }
.scroll { width: 17px; background: #f1f1f1; display: flex; flex-direction: column; align-items: center; padding-top: 8px; }
.scroll svg { width: 8px; height: 4px; }
.thumb { width: 13px; height: 797px; background: #c1c1c1; margin-top: 5px; }
.scroll .dn { margin-top: 112px; }

/* taskbar */
.taskbar { height: 40px; flex: none; display: flex; background: linear-gradient(90deg, #272526 0 650px, #32202a 730px, #492029 820px, #30242a 940px, #282527 1100px, #252425); color: #fff; }
.start { width: 48px; display: flex; align-items: center; justify-content: center; }
.start svg { width: 16px; height: 16px; }
.search { width: 344px; border: 1px solid #656565; background: #323232; display: flex; align-items: center; padding-left: 11px; color: #ddd; font-size: 14px; letter-spacing: -.05px; }
.search svg { width: 17px; height: 17px; margin-right: 11px; }
.app { width: 49px; display: flex; align-items: center; justify-content: center; }
.app svg { width: 24px; height: 24px; }
.app.active { background: #4d4d4d; border-bottom: 2px solid #f7a4b5; padding-top: 2px; }
.app.open { background: linear-gradient(#f7a4b5, #f7a4b5) 4px 38px / 32px 2px no-repeat, linear-gradient(#b07b89, #b07b89) 36px 38px / 8px 2px no-repeat; }
.mir { width: 24px; height: 24px; border-radius: 2px; background: #ebebeb; color: #111; font: italic bold 9px/22px "Liberation Serif", serif; text-align: center; }
.mir em { color: #d22; font-size: 11px; }
.mir.dark { background: #120d0e; color: #fff; }
.tray { margin-left: auto; display: flex; align-items: center; }
.moon { width: 20px; height: 20px; }
.temp { font-size: 15px; letter-spacing: -1px; width: 44px; margin-left: 10px; }
.t { width: 16px; height: 16px; margin-right: 8px; }
.clock { width: 64px; font-size: 12px; letter-spacing: -.6px; display: flex; flex-direction: column; align-items: center; line-height: 18px; margin-left: -4px; }
.note { width: 16px; height: 16px; margin: -2px 20px 0 12px; position: relative; }
.note svg { width: 16px; height: 16px; }
.note b { position: absolute; left: 5px; top: 7px; width: 20px; height: 17px; border: 1px solid #aaa; border-radius: 9px; background: #3a3a3a; font-size: 10px; line-height: 15px; text-align: center; }
.desk { width: 5px; height: 40px; border-left: 1px solid #666; }
```
